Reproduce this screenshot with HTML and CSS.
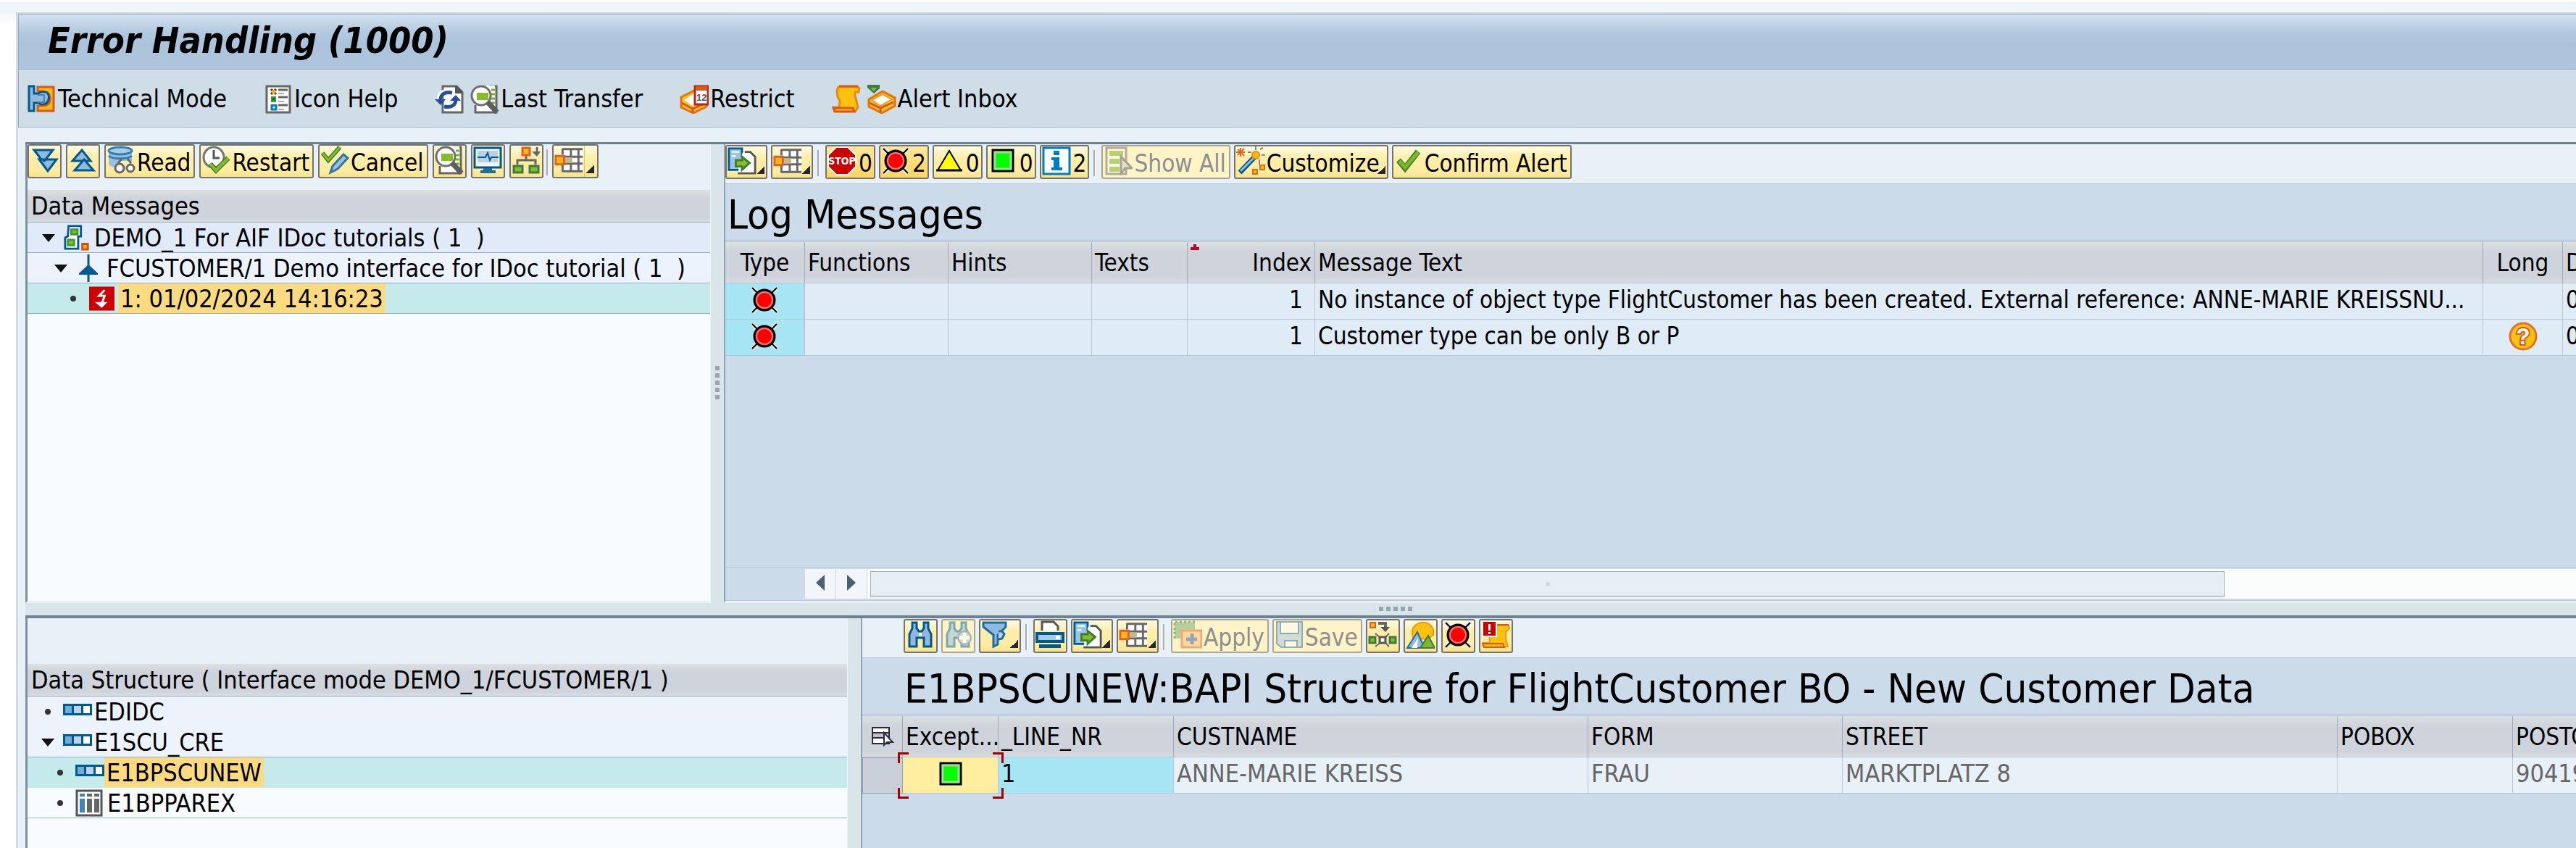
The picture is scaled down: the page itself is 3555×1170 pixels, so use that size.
FILE: index.html
```html
<!DOCTYPE html>
<html lang="en">
<head>
<meta charset="utf-8">
<title>Error Handling (1000)</title>
<link rel="stylesheet" href="styles.css">
</head>
<body>
<svg class="sprite" aria-hidden="true">
  <defs>
    <symbol id="i-tech" viewBox="0 0 40 40">
      <path d="M14 3H36V36H14V29H20C29 29 31 24 31 19S29 9 20 9H14z" fill="#fdb913" stroke="#d9591b" stroke-width="3"/>
      <path d="M2 2H9V12H15C18 9 27 8 29 14 31 19 28 24 25 26 21 28 17 27 15 25H9V36H2z" fill="#8fb9df" stroke="#005a8f" stroke-width="3"/>
      <path d="M14 14H23V24H14" fill="none" stroke="#4f7fae" stroke-width="2"/>
    </symbol>
    <symbol id="i-help" viewBox="0 0 36 40">
      <path d="M2 2H34V38H2z" fill="#fff" stroke="#666" stroke-width="3"/>
      <path d="M8 6L15 13M15 6L8 13" stroke="#333" stroke-width="3"/><path d="M9 7H14V12H9z" fill="#f9b000"/>
      <path d="M8 16H15V24H8z" fill="#3c9a35"/><path d="M10 18H13V21H10z" fill="#17632a"/>
      <path d="M9 28.500H15V34H9z" fill="#fff" stroke="#0079be" stroke-width="3"/>
      <path d="M18 7H31M18 17H31M18 28H31" stroke="#666" stroke-width="3"/><path d="M18 12H26M18 23H26M18 34H26" stroke="#aaa" stroke-width="2"/>
    </symbol>
    <symbol id="i-refresh" viewBox="0 0 40 40">
      <path d="M11 2H30L38 10V38H11z" fill="#fff" stroke="#666" stroke-width="3"/><path d="M28 2V12H38V9L31 2z" fill="#555"/>
      <path d="M7 22V18C8 11 15 8 24 11" fill="none" stroke="#fff" stroke-width="8"/><path d="M30 18V22C29 30 22 33 13 30" fill="none" stroke="#fff" stroke-width="8"/>
      <path d="M8 21C8 13 14 9 24 11" fill="none" stroke="#23509c" stroke-width="5"/><path d="M0 20H15L8 28z" fill="#23509c"/>
      <path d="M29 20C29 28 23 32 13 30" fill="none" stroke="#23509c" stroke-width="5"/><path d="M21 22H36L29 14z" fill="#23509c"/>
    </symbol>
    <symbol id="i-magdoc" viewBox="0 0 40 40">
      <path d="M7 28V38H36V2H26" fill="#fff" stroke="#666" stroke-width="3"/>
      <path d="M22 1H34V30H22z" fill="#fff"/>
      <path d="M29 7H34M29 13H34M29 19H34M29 25H34" stroke="#7ab51d" stroke-width="3"/>
      <circle cx="15" cy="15" r="13" fill="#fff" stroke="#6e6e6e" stroke-width="3"/>
      <path d="M9 11H25V21H9z" fill="#86bc25"/>
      <path d="M24 24L37 38" stroke="#5e5e5e" stroke-width="7"/>
    </symbol>
    <symbol id="i-calbox" viewBox="0 0 40 40">
      <path d="M2 17L20 8 37 20V30L19 39 2 31z" fill="#fdc12b" stroke="#e2730f" stroke-width="3"/>
      <path d="M6 21L20 12 32 21 18 29z" fill="#fff"/><path d="M3 25L18 33 36 25M18 32V39" fill="none" stroke="#d9591b" stroke-width="3"/>
      <path d="M21 2H39V27H21z" fill="#fff" stroke="#b02a1a" stroke-width="3"/><path d="M22 2H38V8H22z" fill="#d9591b"/>
      <text x="23" y="22" class="t-cal">12</text>
    </symbol>
    <symbol id="i-scroll" viewBox="0 0 40 40">
      <path d="M9 3H36L38 5 37 10H32V16L34 22 36 31 33 36H4L2 31H10L11 22 8 17 7 8z" fill="#fdc20f" stroke="#e68a10" stroke-width="3"/>
      <path d="M10 2H36M2 32H29L31 37H4z" fill="#fdb913" stroke="#d9591b" stroke-width="3"/>
    </symbol>
    <symbol id="i-inbox" viewBox="0 0 40 40">
      <path d="M2 20L21 9 38 18V29L20 39 2 30z" fill="#fdc12b" stroke="#e2730f" stroke-width="3"/>
      <path d="M6 21L21 13 34 20 18 29z" fill="#fff" stroke="#f0a020" stroke-width="2"/><path d="M3 25L18 32 36 24M18 32V39" fill="none" stroke="#d9591b" stroke-width="3"/>
      <path d="M0 0H17V5L9 12 0 4z" fill="#3c7a4a"/><path d="M4 4H13L9 9z" fill="#86bc25"/>
    </symbol>
    <symbol id="i-down" viewBox="0 0 40 40">
      <path d="M6 6H32L19 23z" fill="#8fb9df" stroke="#005a8f" stroke-width="3"/><path d="M13 19H37L25 35z" fill="#8fb9df" stroke="#005a8f" stroke-width="3"/><path d="M16 19H24L20 23z" fill="#005a8f"/>
    </symbol>
    <symbol id="i-up" viewBox="0 0 40 40">
      <path d="M19 6L31 21H6z" fill="#8fb9df" stroke="#005a8f" stroke-width="3"/><path d="M22 19L35 34H9z" fill="#8fb9df" stroke="#005a8f" stroke-width="3"/>
    </symbol>
    <symbol id="i-db" viewBox="0 0 40 40">
      <path d="M3 6V26C6 30 14 31 17 31V21H35V6z" fill="#9dc0e0"/><ellipse cx="19" cy="7" rx="16" ry="5" fill="#aacbe8" stroke="#337fb0" stroke-width="3"/>
      <path d="M3 14C8 19 30 19 35 14" fill="none" stroke="#337fb0" stroke-width="3"/>
      <path d="M16 24L21 18M34 24L29 18" stroke="#666" stroke-width="3"/>
      <circle cx="18" cy="31" r="6" fill="#fff" stroke="#666" stroke-width="3"/><circle cx="33" cy="31" r="5" fill="#fff" stroke="#666" stroke-width="3"/>
    </symbol>
    <symbol id="i-clock" viewBox="0 0 40 40">
      <circle cx="17" cy="16" r="14" fill="#fff" stroke="#777" stroke-width="3"/><path d="M17 6V17H25" fill="none" stroke="#555" stroke-width="3"/>
      <path d="M12 25L20 34 37 17" fill="none" stroke="#3d7d2c" stroke-width="7"/><path d="M12 25L20 34 37 17" fill="none" stroke="#86bc25" stroke-width="4"/>
    </symbol>
    <symbol id="i-checkpen" viewBox="0 0 40 40">
      <path d="M3 10L11 20 27 2" fill="none" stroke="#3d7d2c" stroke-width="6"/><path d="M3 10L11 20 27 2" fill="none" stroke="#86bc25" stroke-width="3"/>
      <path d="M14 37L17 28 32 12 38 17 24 32z" fill="#9dc0e0" stroke="#33779f" stroke-width="3"/>
    </symbol>
    <symbol id="i-monitor" viewBox="0 0 40 40">
      <path d="M2 3H38V30H2z" fill="#f2f7fb" stroke="#005a8f" stroke-width="3"/><path d="M6 7H34V23H6z" fill="#b9d0e6"/>
      <path d="M6 16H17L20 10 23 20 25 16H35" fill="none" stroke="#005a8f" stroke-width="2"/>
      <path d="M14 31H26V34H31V38H10V34H14z" fill="#1e6ca0"/>
    </symbol>
    <symbol id="i-tree" viewBox="0 0 40 40">
      <path d="M20 14V19M8 26V20H33V26M35 2V10" fill="none" stroke="#666" stroke-width="3"/><path d="M28 8H40L35 15z" fill="#666"/>
      <path d="M15 3H25V13H15z" fill="#fdb913" stroke="#e0602a" stroke-width="3"/><path d="M3 28H15V37H3zM25 28H37V37H25z" fill="#86bc25" stroke="#3c7a4a" stroke-width="3"/>
    </symbol>
    <symbol id="i-grid" viewBox="0 0 42 40">
      <path d="M12 4H41V36H12z" fill="#fff"/><path d="M12 4H41M12 15H41M12 25H41M12 36H41M24 4V37M35 4V37M12 3V12M12 27V37" stroke="#666" stroke-width="3"/>
      <path d="M14 16H26V24H14z" fill="#c4b88e"/><path d="M2 14H14V26H2z" fill="#fdb913" stroke="#e0602a" stroke-width="3"/>
    </symbol>
    <symbol id="i-export" viewBox="0 0 42 40">
      <path d="M2 2H21V33H2z" fill="#9dc4e6" stroke="#005a8f" stroke-width="3"/><path d="M6 7H17M6 13H12" stroke="#e8f2fa" stroke-width="3"/>
      <path d="M22 8H33L39 14V38H16V24" fill="#fff"/><path d="M25 7H33L40 14V38H15" fill="none" stroke="#555" stroke-width="3"/>
      <path d="M12 19H21V14L32 23 21 33V28H12z" fill="#86bc25" stroke="#3d7d2c" stroke-width="3"/>
    </symbol>
    <symbol id="i-stop" viewBox="0 0 40 40">
      <path d="M12 1H28L39 12V28L28 39H12L1 28V12z" fill="#c00" stroke="#fff" stroke-width="2"/><text x="20" y="25" text-anchor="middle" class="t-stop">STOP</text>
    </symbol>
    <symbol id="i-red" viewBox="0 0 40 40">
      <path d="M3 3L37 37M37 3L3 37" stroke="#e8e8e8" stroke-width="6"/><path d="M3 3L37 37M37 3L3 37" stroke="#000" stroke-width="2"/>
      <circle cx="20" cy="20" r="14" fill="#f00" stroke="#000" stroke-width="3"/><circle cx="20" cy="20" r="11" fill="none" stroke="#e37c7c" stroke-width="2"/>
    </symbol>
    <symbol id="i-yellow" viewBox="0 0 40 40"><path d="M20 6L36 33H4z" fill="#ff0" stroke="#000" stroke-width="2"/><path d="M2 33H38" stroke="#000" stroke-width="3"/></symbol>
    <symbol id="i-green" viewBox="0 0 40 40"><path d="M6 5H34V34H6z" fill="#0f0" stroke="#000" stroke-width="3"/><path d="M9 8H31V31H9z" fill="none" stroke="#a9d49a" stroke-width="3"/></symbol>
    <symbol id="i-info" viewBox="0 0 40 40"><path d="M2 2H38V38H2z" fill="#fff" stroke="#007cc0" stroke-width="3"/><path d="M16 6H24V12H16zM13 15H24V29H28V33H13V29H16V19H13z" fill="#007cc0"/></symbol>
    <symbol id="i-list" viewBox="0 0 40 40"><path d="M4 2H31V38H4z" fill="#fff" stroke="#666" stroke-width="3"/><path d="M8 6H27V13H8zM8 17H22V24H8zM8 28H22V35H8z" fill="#72ad27"/><path d="M24 14V37L30 30H39z" fill="#ccc" stroke="#555" stroke-width="3"/></symbol>
    <symbol id="i-wand" viewBox="0 0 40 40">
      <path d="M6 2V14M0 8H12M2 4L11 13M11 3L2 12" stroke="#e06a20" stroke-width="2"/><path d="M5 36L25 15" stroke="#005a8f" stroke-width="7"/><path d="M6 34L24 16" stroke="#8fb9df" stroke-width="3"/>
      <circle cx="27" cy="12" r="5" fill="#fdb913" stroke="#e88a20" stroke-width="2"/><path d="M27 0V5M35 12H40M16 8H21M33 4L37 2M32 18V25" stroke="#888" stroke-width="2"/>
      <path d="M33 26H39V32H33zM23 32H29V38H23z" fill="#fdb913" stroke="#e06a20" stroke-width="2"/>
    </symbol>
    <symbol id="i-check" viewBox="0 0 40 40"><path d="M6 19L15 30 33 7" fill="none" stroke="#3d7d2c" stroke-width="8"/><path d="M7 20L15 29 33 8" fill="none" stroke="#7ab929" stroke-width="5"/></symbol>
    <symbol id="i-question" viewBox="0 0 40 40"><circle cx="20" cy="20" r="18" fill="#fdc20f" stroke="#e0732a" stroke-width="3"/><text x="20" y="31" text-anchor="middle" class="t-quest">?</text></symbol>
    <symbol id="i-find" viewBox="0 0 40 40"><path d="M9 3H15V11L18 15H22L25 11V3H31V11L35 19V36H25V24H15V36H5V19L9 11z" fill="#8fb9df" stroke="#005a8f" stroke-width="3"/><path d="M18 17H22V22H18z" fill="#fff2b0"/></symbol>
    <symbol id="i-findnext" viewBox="0 0 40 40"><path d="M9 3H15V11L18 15H22L25 11V3H31V11L35 19V36H25V24H15V36H5V19L9 11z" fill="#8fb9df" stroke="#005a8f" stroke-width="3"/><circle cx="29" cy="24" r="9" fill="#9fb6d8" stroke="#446fa8" stroke-width="2"/><path d="M29 17V31M22 24H36" stroke="#fff" stroke-width="5"/></symbol>
    <symbol id="i-filter" viewBox="0 0 40 40"><path d="M3 3H34V9L23 20V33L17 36V20L3 9z" fill="#8fb9df" stroke="#1e6ca0" stroke-width="3"/><path d="M24 15H29L32 19 29 25 24 26" fill="#bcd4ea" stroke="#1e6ca0" stroke-width="3"/></symbol>
    <symbol id="i-print" viewBox="0 0 40 40"><path d="M9 14V2H25L31 8V14" fill="#fff" stroke="#555" stroke-width="3"/><path d="M2 18H38V29H2z" fill="#a9cce6" stroke="#005a8f" stroke-width="4"/><path d="M5 33H35V38H5z" fill="#005a8f"/><path d="M28 21H34V26H28z" fill="#fff"/></symbol>
    <symbol id="i-apply" viewBox="0 0 40 40"><path d="M2 2H30V13H11V25H2z" fill="#3c8a4a" fill-opacity=".7"/><path d="M30 2H2V25" fill="none" stroke="#2c7a3a" stroke-width="3" stroke-dasharray="3 3"/><path d="M12 14H39V37H12z" fill="#f8c070" stroke="#e0602a" stroke-width="3"/><path d="M26 18V33M18 26H33" stroke="#3457a8" stroke-width="5"/></symbol>
    <symbol id="i-save" viewBox="0 0 40 40"><path d="M3 2H38V37H9L3 32z" fill="#a6c6e2" stroke="#1e6ca0" stroke-width="2"/><path d="M8 2H33V18H8zM14 28H31V37H14z" fill="#fff" stroke="#1e6ca0" stroke-width="2"/></symbol>
    <symbol id="i-spread" viewBox="0 0 40 40"><path d="M10 36L18 30M10 18L17 24M29 18L23 24M29 36L23 30" stroke="#666" stroke-width="2"/><path d="M14 4H24V10" fill="none" stroke="#666" stroke-width="4"/><path d="M17 9H30L24 16z" fill="#555"/><path d="M3 3H10V10H3z" fill="#fdb913" stroke="#e0602a" stroke-width="2"/><path d="M2 23H10V31H2zM30 23H38V31H30z" fill="#86bc25" stroke="#3c7a4a" stroke-width="3"/><path d="M16 23H24V31H16z" fill="#fff" stroke="#555" stroke-width="3"/></symbol>
    <symbol id="i-mount" viewBox="0 0 40 40"><path d="M9 18C7 2 32 -4 38 13V20L30 26 10 24z" fill="#fdc20f" stroke="#f0960f" stroke-width="2"/><path d="M2 38L16 16 26 38z" fill="#8fb9df" stroke="#1e6ca0" stroke-width="2"/><path d="M8 38L17 24 16 38z" fill="#fff"/><path d="M20 38L31 21 40 38z" fill="#7ab929" stroke="#3c7a4a" stroke-width="2"/></symbol>
    <symbol id="i-alert" viewBox="0 0 40 40"><path d="M16 7H38L39 11 34 16V26L37 36H5L3 31H12L11 16z" fill="#fdc20f" stroke="#f0960f" stroke-width="2"/><path d="M20 6H38M2 32H30L32 37H4z" fill="#fdb913" stroke="#d9591b" stroke-width="2"/><path d="M2 1H21V22H2z" fill="#c00" stroke="#fff" stroke-width="2"/><path d="M10 5H13V14H10zM10 16H13V19H10z" fill="#fff"/></symbol>
    <symbol id="i-system" viewBox="0 0 38 38"><path d="M7 2H25V17H21V35H2V19L6 17z" fill="#fff" stroke="#005a8f" stroke-width="3"/><path d="M11 7H20V14H11zM6 22H15V30H6z" fill="#86bc25" stroke="#3c9a35" stroke-width="3"/><path d="M27 28H35V36H27z" fill="#fdb913" stroke="#d0501a" stroke-width="3"/></symbol>
    <symbol id="i-iface" viewBox="0 0 28 38"><path d="M14 0V38" stroke="#005a8f" stroke-width="3"/><path d="M14 14L27 26V28H1V26z" fill="#005a8f"/></symbol>
    <symbol id="i-error" viewBox="0 0 36 34"><path d="M0 0H36V34H0z" fill="#c00"/><path d="M22 5L14 13H22L18 24" fill="none" stroke="#fff" stroke-width="3"/><path d="M8 22H26L18 30z" fill="#fff"/></symbol>
    <symbol id="i-seg" viewBox="0 0 40 16"><path d="M0 0H40V16H0z" fill="#005a8f"/><path d="M3 3H12V13H3z" fill="#6faed6"/><path d="M15 3H25V13H15z" fill="#bcd4ea"/><path d="M28 3H37V13H28z" fill="#fff"/></symbol>
    <symbol id="i-cols" viewBox="0 0 38 38"><path d="M2 2H36V36H2z" fill="#fff" stroke="#555" stroke-width="3"/><path d="M6 6H13V10H6zM6 13H13V32H6z" fill="#3e87b4"/><path d="M16 6H23V10H16zM16 13H23V32H16zM26 6H33V10H26zM26 13H33V32H26z" fill="#666"/></symbol>
    <symbol id="i-selall" viewBox="0 0 32 28"><path d="M2 2H25V24H2z" fill="#fff" stroke="#2b2b40" stroke-width="2"/><path d="M2 9H25V16H2z" fill="#c0c0c8" stroke="#2b2b40" stroke-width="2"/><path d="M18 9V26L22 22H30z" fill="#fff" stroke="#2b2b40" stroke-width="2"/></symbol>
    <symbol id="i-open" viewBox="0 0 18 12"><path d="M0 1H18L9 12z" fill="#111"/></symbol>
    <symbol id="i-dot" viewBox="0 0 18 12"><circle cx="9" cy="6" r="4" fill="#333"/></symbol>
  </defs>
</svg>

<div class="window">
  <header class="titlebar"><h1>Error Handling (1000)</h1></header>
  <nav class="appbar">
    <button type="button"><svg class="ic"><use href="#i-tech"/></svg>Technical Mode</button>
    <button type="button"><svg class="ic"><use href="#i-help"/></svg>Icon Help</button>
    <button type="button"><svg class="ic gap"><use href="#i-refresh"/></svg><svg class="ic"><use href="#i-magdoc"/></svg>Last Transfer</button>
    <button type="button"><svg class="ic"><use href="#i-calbox"/></svg>Restrict</button>
    <button type="button"><svg class="ic gap"><use href="#i-scroll"/></svg><svg class="ic"><use href="#i-inbox"/></svg>Alert Inbox</button>
  </nav>

  <main class="workspace">
    <section class="split split-top">
      <div class="pane tree-pane">
        <div class="toolbar">
          <button class="btn" type="button" aria-label="Expand"><svg class="ic"><use href="#i-down"/></svg></button>
          <button class="btn" type="button" aria-label="Collapse"><svg class="ic"><use href="#i-up"/></svg></button>
          <button class="btn" type="button"><svg class="ic"><use href="#i-db"/></svg><span>Read</span></button>
          <button class="btn" type="button"><svg class="ic"><use href="#i-clock"/></svg><span>Restart</span></button>
          <button class="btn" type="button"><svg class="ic"><use href="#i-checkpen"/></svg><span>Cancel</span></button>
          <button class="btn" type="button" aria-label="Display"><svg class="ic"><use href="#i-magdoc"/></svg></button>
          <button class="btn" type="button" aria-label="Monitor"><svg class="ic"><use href="#i-monitor"/></svg></button>
          <button class="btn" type="button" aria-label="Hierarchy"><svg class="ic"><use href="#i-tree"/></svg></button>
          <i class="sep sep-tight"></i>
          <button class="btn menu menu-wide" type="button" aria-label="Layout"><svg class="ic"><use href="#i-grid"/></svg></button>
        </div>
        <h2 class="tree-head">Data Messages</h2>
        <ul class="tree">
          <li class="row lvl1"><svg class="tw"><use href="#i-open"/></svg><svg class="ti"><use href="#i-system"/></svg><span>DEMO_1 For AIF IDoc tutorials ( 1&nbsp; )</span></li>
          <li class="row lvl2"><svg class="tw"><use href="#i-open"/></svg><svg class="ti"><use href="#i-iface"/></svg><span>FCUSTOMER/1 Demo interface for IDoc tutorial ( 1&nbsp; )</span></li>
          <li class="row lvl3 picked"><svg class="tw"><use href="#i-dot"/></svg><svg class="ti"><use href="#i-error"/></svg><mark>1: 01/02/2024 14:16:23</mark></li>
        </ul>
      </div>
      <div class="vsplit"><i></i><i></i><i></i><i></i><i></i></div>
      <div class="pane grid-pane">
        <div class="toolbar">
          <button class="btn menu" type="button" aria-label="Export"><svg class="ic"><use href="#i-export"/></svg></button>
          <button class="btn menu" type="button" aria-label="Layout"><svg class="ic"><use href="#i-grid"/></svg></button>
          <i class="sep"></i>
          <button class="btn count on" type="button"><svg class="ic"><use href="#i-stop"/></svg><span>0</span></button>
          <button class="btn count on" type="button"><svg class="ic"><use href="#i-red"/></svg><span>2</span></button>
          <button class="btn count" type="button"><svg class="ic"><use href="#i-yellow"/></svg><span>0</span></button>
          <button class="btn count" type="button"><svg class="ic"><use href="#i-green"/></svg><span>0</span></button>
          <button class="btn count" type="button"><svg class="ic"><use href="#i-info"/></svg><span>2</span></button>
          <i class="sep"></i>
          <button class="btn" type="button" disabled><svg class="ic"><use href="#i-list"/></svg><span>Show All</span></button>
          <button class="btn menu labelled" type="button"><svg class="ic"><use href="#i-wand"/></svg><span>Customize</span></button>
          <button class="btn" type="button"><svg class="ic"><use href="#i-check"/></svg><span>Confirm Alert</span></button>
        </div>
        <h2 class="grid-title">Log Messages</h2>
        <table class="log">
          <colgroup><col class="w110"><col class="w198"><col class="w198"><col class="w132"><col class="w176"><col class="w1612"><col class="w110"><col class="w198"></colgroup>
          <thead><tr><th class="mid">Type</th><th>Functions</th><th>Hints</th><th>Texts</th><th class="num sorted">Index</th><th>Message Text</th><th class="mid">Long</th><th>Date</th></tr></thead>
          <tbody>
            <tr><td class="key mid"><svg class="st"><use href="#i-red"/></svg></td><td></td><td></td><td></td><td class="num">1</td><td>No instance of object type FlightCustomer has been created. External reference: ANNE-MARIE KREISSNU...</td><td></td><td>01/02/2024</td></tr>
            <tr><td class="key mid"><svg class="st"><use href="#i-red"/></svg></td><td></td><td></td><td></td><td class="num">1</td><td>Customer type can be only B or P</td><td class="mid"><svg class="st"><use href="#i-question"/></svg></td><td>01/02/2024</td></tr>
          </tbody>
        </table>
        <div class="hscroll">
          <button type="button" aria-label="Scroll left"><svg class="ar" viewBox="0 0 12 22"><path d="M12 0V22L0 11z"/></svg></button>
          <button type="button" aria-label="Scroll right"><svg class="ar" viewBox="0 0 12 22"><path d="M0 0V22L12 11z"/></svg></button>
          <div class="track"><div class="thumb" style="width:79.4%"><i></i></div></div>
        </div>
      </div>
    </section>

    <div class="hsplit"><i></i><i></i><i></i><i></i><i></i></div>

    <section class="split split-bottom">
      <div class="pane tree-pane">
        <div class="toolbar"></div>
        <h2 class="tree-head">Data Structure ( Interface mode DEMO_1/FCUSTOMER/1 )</h2>
        <ul class="tree plain">
          <li class="row lvl1"><svg class="tw"><use href="#i-dot"/></svg><svg class="seg"><use href="#i-seg"/></svg><span>EDIDC</span></li>
          <li class="row lvl1 last"><svg class="tw"><use href="#i-open"/></svg><svg class="seg"><use href="#i-seg"/></svg><span>E1SCU_CRE</span></li>
          <li class="row lvl2 picked"><svg class="tw"><use href="#i-dot"/></svg><svg class="seg"><use href="#i-seg"/></svg><mark>E1BPSCUNEW</mark></li>
          <li class="row lvl2 leaf last"><svg class="tw"><use href="#i-dot"/></svg><svg class="ti"><use href="#i-cols"/></svg><span>E1BPPAREX</span></li>
        </ul>
      </div>
      <div class="vsplit"></div>
      <div class="pane grid-pane">
        <div class="toolbar indent">
          <button class="btn" type="button" aria-label="Find"><svg class="ic"><use href="#i-find"/></svg></button>
          <button class="btn" type="button" disabled aria-label="Find next"><svg class="ic"><use href="#i-findnext"/></svg></button>
          <button class="btn menu" type="button" aria-label="Filter"><svg class="ic"><use href="#i-filter"/></svg></button>
          <i class="sep"></i>
          <button class="btn" type="button" aria-label="Print"><svg class="ic"><use href="#i-print"/></svg></button>
          <button class="btn menu" type="button" aria-label="Export"><svg class="ic"><use href="#i-export"/></svg></button>
          <button class="btn menu" type="button" aria-label="Layout"><svg class="ic"><use href="#i-grid"/></svg></button>
          <i class="sep"></i>
          <button class="btn" type="button" disabled><svg class="ic"><use href="#i-apply"/></svg><span>Apply</span></button>
          <button class="btn" type="button" disabled><svg class="ic"><use href="#i-save"/></svg><span>Save</span></button>
          <button class="btn" type="button" aria-label="Distribute"><svg class="ic"><use href="#i-spread"/></svg></button>
          <button class="btn" type="button" aria-label="Picture"><svg class="ic"><use href="#i-mount"/></svg></button>
          <button class="btn" type="button" aria-label="Errors"><svg class="ic"><use href="#i-red"/></svg></button>
          <button class="btn" type="button" aria-label="Alert log"><svg class="ic"><use href="#i-alert"/></svg></button>
        </div>
        <h2 class="grid-title indent">E1BPSCUNEW:BAPI Structure for FlightCustomer BO - New Customer Data</h2>
        <table class="data">
          <colgroup><col class="w56"><col class="w132"><col class="w242"><col class="w572"><col class="w351"><col class="w683"><col class="w242"><col class="w198"></colgroup>
          <thead><tr><th class="mid"><svg class="sel"><use href="#i-selall"/></svg></th><th>Except...</th><th>_LINE_NR</th><th>CUSTNAME</th><th>FORM</th><th>STREET</th><th>POBOX</th><th>POSTCODE</th></tr></thead>
          <tbody><tr><td class="pick"></td><td class="focus mid"><svg class="st"><use href="#i-green"/></svg><span class="frame"></span></td><td class="key">1</td><td>ANNE-MARIE KREISS</td><td>FRAU</td><td>MARKTPLATZ 8</td><td></td><td>90419</td></tr></tbody>
        </table>
      </div>
    </section>
  </main>
</div>
</body>
</html>
```
FILE: styles.css
```css
* { box-sizing: border-box; }

body {
  margin: 0;
  min-height: 100vh;
  display: flex;
  background: linear-gradient(#fff 2px, #f0f4fb 3px, #f0f4fb 17px, #fff 34px);
  font: 33px/41px "DejaVu Sans Condensed", "DejaVu Sans", "Noto Sans", sans-serif;
  color: #000;
  overflow: hidden;
}

.sprite { position: absolute; width: 0; height: 0; }
h1, h2, ul { margin: 0; padding: 0; font-weight: 400; }
ul { list-style: none; }
button { font: inherit; color: inherit; margin: 0; padding: 0; border: 0; background: none; white-space: nowrap; }
svg { flex: none; display: block; }

.t-cal { font: 700 13px "Liberation Sans", sans-serif; fill: #555; }
.t-stop { font: 700 14px "DejaVu Sans Condensed", sans-serif; fill: #fff; }
.t-quest { font: 700 31px "Liberation Sans", sans-serif; fill: #fff; stroke: #d9591b; stroke-width: 4px; paint-order: stroke; }

.window {
  flex: 1;
  min-width: 0;
  display: flex;
  flex-direction: column;
  margin: 17px 0 0 22px;
  border-top: 2px solid #d0d8e3;
  border-left: 3px solid #d3dbe8;
  background: #e8f0f8;
}

/* title and application toolbar */
.titlebar {
  height: 78px;
  padding-left: 40px;
  border-top: 1px solid #98a8bb;
  border-bottom: 1px solid #9fb3c6;
  border-left: 1px solid #98a8bb;
  background: linear-gradient(#d2e1ef, #b3cae0 24px, #abc3db 40px, #adc5dd);
  display: flex;
  align-items: center;
}
.titlebar h1 { font-size: 50px; line-height: 72px; font-weight: 700; font-style: italic; padding-bottom: 4px; }

.appbar {
  height: 79px;
  padding-left: 12px;
  display: flex;
  align-items: center;
  gap: 51px;
  font-size: 34px;
  border-top: 1px solid #e4edf3;
  border-bottom: 1px solid #a5b5c3;
  border-left: 1px solid #98a8bb;
  background: #cfdde7;
}
.appbar button { display: flex; align-items: center; gap: 2px; }
.ic { width: 40px; height: 40px; }
.ic.gap { margin-right: 7px; }

/* split layout */
.workspace {
  flex: 1;
  display: grid;
  grid-template-rows: 636fr 17px 321fr;
  padding: 20px 0 0 10px;
}
.split { display: grid; min-width: 0; border-top: 3px solid #6c8293; }
.split-top { grid-template-columns: minmax(0, 945px) 19px minmax(0, 1fr); }
.split-bottom { grid-template-columns: minmax(0, 1134px) 19px minmax(0, 1fr); border-top-width: 4px; }
.pane { min-width: 0; display: flex; flex-direction: column; overflow: hidden; }
.tree-pane { border-left: 3px solid #7d91a0; background: #f8fbff; font-size: 34px; }
.grid-pane { border-left: 2px solid #8fa3b5; background: #cbdbea; }
.split-top .pane { border-bottom: 3px solid #e9eff2; }

.vsplit, .hsplit { display: flex; align-items: center; justify-content: center; gap: 4px; background: #dae5ea; }
.vsplit { flex-direction: column; border-left: 1px solid #eef3f6; padding-top: 24px; }
.hsplit { padding-left: 262px; padding-bottom: 2px; }
.vsplit i, .hsplit i { width: 6px; height: 6px; background: #98a5b5; }

/* toolbars */
.toolbar { display: flex; align-items: flex-start; gap: 6px; height: 63px; background: #e8f0f8; font-size: 33px; }
.grid-pane .toolbar { gap: 5px; height: 55px; padding-top: 1px; border-bottom: 1px solid #b9c8d9; }
.grid-pane .toolbar.indent { padding-left: 57px; }
.btn {
  height: 47px;
  padding: 0 2px 0 1px;
  display: flex;
  align-items: center;
  border: 2px solid #77736a;
  border-radius: 3px;
  background: linear-gradient(#fffbe2, #ffeea8 16px, #feeca2 34px, #f8e28c);
}
.btn .ic { margin-bottom: 4px; }
.btn span { padding: 3px 2px 0 2px; }
.btn.on { background: linear-gradient(#ffe79b, #ffd560); }
.btn:disabled { color: #8e8e8e; background: #fff4c8; border-color: #aaa68f; }
.btn:disabled .ic { opacity: .5; }
.btn.menu {
  padding-right: 13px;
  background:
    linear-gradient(135deg, transparent 50%, #252536 50%) right 2px bottom 5px / 11px 11px no-repeat,
    linear-gradient(#fffbe2, #ffeea8 16px, #feeca2 34px, #f8e28c);
}
.btn.menu-wide {
  padding-right: 19px;
  background:
    linear-gradient(135deg, transparent 50%, #252536 50%) right 4px bottom 5px / 11px 11px no-repeat,
    linear-gradient(#d8c98a, #d8c98a) right 17px top 0 / 1px 100% no-repeat,
    linear-gradient(#fffbe2, #ffeea8 16px, #feeca2 34px, #f8e28c);
}
.btn.menu.labelled { padding-right: 8px; }
.btn.count span { padding: 3px 0 0 3px; }
.sep { width: 3px; height: 36px; margin: 7px 3px 0 1px; background: linear-gradient(90deg, #aaa 2px, #fff 2px); }
.sep.sep-tight { margin: 7px -1px 0 -2px; }

/* trees */
.tree-head {
  height: 45px;
  padding: 2px 0 0 5px;
  font-size: 34px;
  white-space: nowrap;
  border-bottom: 1px solid #9aa9ba;
  background: linear-gradient(#dce0e3, #cfd3db 12px, #cfd3db 38px, #d9dee2);
}
.row {
  height: 42px;
  display: flex;
  align-items: center;
  white-space: nowrap;
  border-bottom: 1px solid #98b0c6;
  background: #edf3fc;
}
.row.lvl1 { padding-left: 20px; }
.row.lvl2 { padding-left: 37px; }
.row.lvl3 { padding-left: 54px; }
.tree:not(.plain) .lvl1 { background: #e1eaf8; }
.row.picked, .tree .row.picked { background: #c4eaec; }
.row span, .row mark { height: 41px; padding: 1px 3px 0; }
.row mark { background: #fcdb80; color: #000; }
.tw { width: 18px; height: 12px; margin-right: 11px; }
.lvl2 .tw { margin-right: 15px; }
.lvl3 .tw { margin-right: 13px; }
.ti { width: 38px; height: 36px; margin-right: 2px; }
.lvl2 .ti { width: 28px; height: 38px; margin-right: 8px; }
.lvl3 .ti { width: 35px; margin-right: 5px; }
.plain .row { border-bottom-color: transparent; }
.plain .row.last { border-bottom-color: #98b0c6; }
.plain .leaf { background: #f8fbff; }
.plain .tw { margin-right: 12px; }
.plain .lvl2 .ti { width: 38px; margin-right: 3px; }
.seg { width: 40px; height: 16px; margin-bottom: 6px; }
.plain .lvl1 { padding-left: 19px; }
.plain .lvl2 { padding-left: 36px; }

/* grids */
.grid-title {
  height: 80px;
  padding: 8px 0 0 3px;
  font-size: 56px;
  line-height: 68px;
  white-space: nowrap;
  border-bottom: 3px double #b7c6d8;
}
.grid-title.indent { padding-left: 58px; }
table { table-layout: fixed; border-collapse: separate; border-spacing: 0; width: 0; }
th, td {
  padding: 0 4px;
  font-weight: 400;
  text-align: left;
  white-space: nowrap;
  overflow: hidden;
  border-right: 1px solid #b9c6d6;
  border-bottom: 1px solid #b9c6d6;
}
th { height: 57px; border-right-color: #9faab7; background: linear-gradient(#dbe0e3, #cfd4dc 14px, #cfd3db 48px, #d8dde1); }
td { height: 50px; padding-bottom: 4px; background: #dfebf5; }
.mid { text-align: center; }
.mid svg { margin: 0 auto; }
.num { text-align: right; }
td.num { padding-right: 16px; }
th.sorted { background: linear-gradient(#c4002f, #c4002f) 4px 7px / 12px 4px no-repeat, linear-gradient(#c4002f, #c4002f) 8px 3px / 4px 4px no-repeat, linear-gradient(#dbe0e3, #cfd4dc 14px, #cfd3db 48px, #d8dde1); }
td.key { background: #a6e5f4; border-right-width: 2px; }
.st { width: 40px; height: 40px; }
.sel { width: 32px; height: 28px; }
.w56 { width: 56px; } .w110 { width: 110px; } .w132 { width: 132px; } .w176 { width: 176px; }
.w198 { width: 198px; } .w242 { width: 242px; } .w351 { width: 351px; } .w572 { width: 572px; }
.w683 { width: 683px; } .w1612 { width: 1612px; }
.data td { background: #e8f0f8; color: #666; font-size: 34px; }
.data td.key { background: #a6e5f4; color: #000; border-right-width: 1px; }
.data td.pick { background: #c9d0da; border: 1px solid #97a2b0; }
.data td.focus { background: #ffee9f; position: relative; overflow: visible; }
.frame {
  position: absolute;
  inset: -7px -8px -8px -7px;
  z-index: 1;
  background:
    linear-gradient(#a80000, #a80000) 0 0 / 15px 3px,
    linear-gradient(#a80000, #a80000) 0 0 / 3px 15px,
    linear-gradient(#a80000, #a80000) 100% 0 / 15px 3px,
    linear-gradient(#a80000, #a80000) 100% 0 / 3px 15px,
    linear-gradient(#a80000, #a80000) 0 100% / 15px 3px,
    linear-gradient(#a80000, #a80000) 0 100% / 3px 15px,
    linear-gradient(#a80000, #a80000) 100% 100% / 15px 3px,
    linear-gradient(#a80000, #a80000) 100% 100% / 3px 15px;
  background-repeat: no-repeat;
}

.hscroll {
  margin-top: auto;
  height: 47px;
  padding: 2px 0 2px 110px;
  display: flex;
  border-top: 1px solid #b9c8d9;
  border-bottom: 1px solid #b9c8d9;
}
.hscroll button { width: 43px; display: flex; align-items: center; justify-content: center; padding-bottom: 4px; background: #f2f6fb; border-right: 1px solid #c8d6e4; }
.ar { width: 12px; height: 22px; fill: #4d6070; }
.track { flex: 1; padding: 3px 0 2px 4px; background: #fbfcfc; }
.thumb { height: 100%; border: 1px solid #9fb0bf; background: linear-gradient(#e6eef6 30px, #d3dfe9); display: flex; align-items: center; justify-content: center; }
.thumb i { width: 6px; height: 6px; border-radius: 3px; background: #cfd9e3; }
```
